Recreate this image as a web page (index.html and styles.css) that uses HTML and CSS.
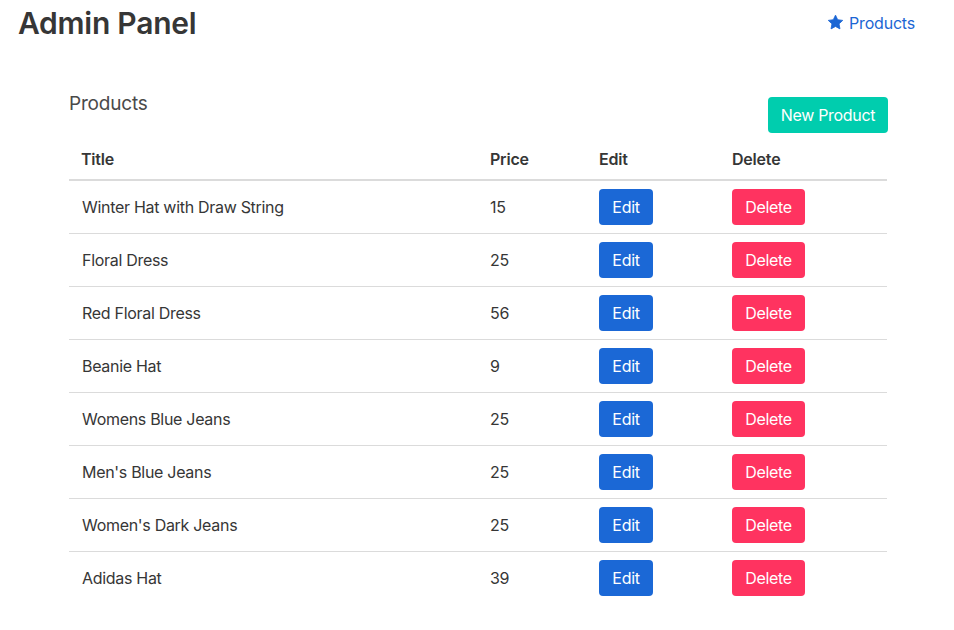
FILE: index.html
```html
<!DOCTYPE html>
<html lang="en">
<head>
<meta charset="utf-8">
<title>Admin Panel</title>
<link rel="stylesheet" href="styles.css">
</head>
<body>
<header class="topbar">
  <h1 class="brand">Admin Panel</h1>
  <a class="nav-link" href="#">
    <svg class="star" viewBox="0 0 24 24" width="17" height="17" aria-hidden="true"><path d="M12 1.6l3.1 6.5 7.1.9-5.2 4.9 1.3 7.1L12 17.6 5.7 21l1.3-7.1L1.8 9l7.1-.9z" fill="currentColor" stroke="currentColor" stroke-width="1.2" stroke-linejoin="round"/></svg>
    <span>Products</span>
  </a>
</header>
<main class="content">
  <div class="section-head">
    <h2 class="section-title">Products</h2>
    <button class="btn btn-primary">New Product</button>
  </div>
  <table class="table">
    <colgroup>
      <col class="c-title"><col class="c-price"><col class="c-edit"><col class="c-delete">
    </colgroup>
    <thead>
      <tr><th>Title</th><th>Price</th><th>Edit</th><th>Delete</th></tr>
    </thead>
    <tbody>
      <tr><td>Winter Hat with Draw String</td><td>15</td><td><button class="btn btn-link">Edit</button></td><td><button class="btn btn-danger">Delete</button></td></tr>
      <tr><td>Floral Dress</td><td>25</td><td><button class="btn btn-link">Edit</button></td><td><button class="btn btn-danger">Delete</button></td></tr>
      <tr><td>Red Floral Dress</td><td>56</td><td><button class="btn btn-link">Edit</button></td><td><button class="btn btn-danger">Delete</button></td></tr>
      <tr><td>Beanie Hat</td><td>9</td><td><button class="btn btn-link">Edit</button></td><td><button class="btn btn-danger">Delete</button></td></tr>
      <tr><td>Womens Blue Jeans</td><td>25</td><td><button class="btn btn-link">Edit</button></td><td><button class="btn btn-danger">Delete</button></td></tr>
      <tr><td>Men's Blue Jeans</td><td>25</td><td><button class="btn btn-link">Edit</button></td><td><button class="btn btn-danger">Delete</button></td></tr>
      <tr><td>Women's Dark Jeans</td><td>25</td><td><button class="btn btn-link">Edit</button></td><td><button class="btn btn-danger">Delete</button></td></tr>
      <tr><td>Adidas Hat</td><td>39</td><td><button class="btn btn-link">Edit</button></td><td><button class="btn btn-danger">Delete</button></td></tr>
    </tbody>
  </table>
</main>
</body>
</html>
```

FILE: styles.css
```css
* { box-sizing: border-box; }
html, body {
  margin: 0;
  padding: 0;
  background: #fff;
  font-family: Inter, "Noto Sans", "Liberation Sans", sans-serif;
  color: #4a4a4a;
  font-size: 16px;
}
.topbar {
  display: flex;
  align-items: center;
  justify-content: space-between;
  height: 46px;
  padding: 0 39px 0 18px;
}
.brand {
  margin: 0;
  font-size: 30px;
  font-weight: 600;
  color: #363636;
  letter-spacing: -0.25px;
}
.nav-link {
  display: flex;
  align-items: center;
  gap: 5px;
  color: #1b66d4;
  text-decoration: none;
  font-size: 16px;
  letter-spacing: -0.2px;
  margin-top: -1px;
}
.star { display: block; }
.content {
  padding: 42px 66px 0 69px;
}
.section-head {
  display: flex;
  justify-content: space-between;
  align-items: flex-start;
  height: 51px;
}
.section-title {
  margin: 4px 0 0;
  font-size: 19px;
  font-weight: 400;
  color: #4a4a4a;
  letter-spacing: -0.2px;
}
.btn {
  font-family: inherit;
  font-size: 16px;
  font-weight: 400;
  letter-spacing: -0.3px;
  border: none;
  border-radius: 4px;
  height: 36px;
  padding: 0;
  color: #fff;
  cursor: pointer;
  line-height: 36px;
  white-space: nowrap;
  text-align: center;
}
.section-head .btn { margin-top: 9px; }
.btn-primary { background: #00cdae; width: 120px; }
.btn-link { background: #1b68d6; width: 54px; }
.btn-danger { background: #ff3360; width: 73px; }
.table {
  width: calc(100% - 1px);
  border-collapse: collapse;
}
.c-title { width: 409px; }
.c-price { width: 109px; }
.c-edit { width: 133px; }
.table th {
  text-align: left;
  font-weight: 600;
  color: #363636;
  padding: 8px 12px;
  line-height: 24px;
  letter-spacing: -0.2px;
  border-bottom: 2px solid #dbdbdb;
}
.table td {
  padding: 8px 12px;
  height: 53px;
  vertical-align: middle;
  border-bottom: 1px solid #dbdbdb;
  color: #363636;
  letter-spacing: -0.3px;
}
.table td:first-child { padding-left: 13px; }
.table tbody tr:last-child td { border-bottom: none; }
```
